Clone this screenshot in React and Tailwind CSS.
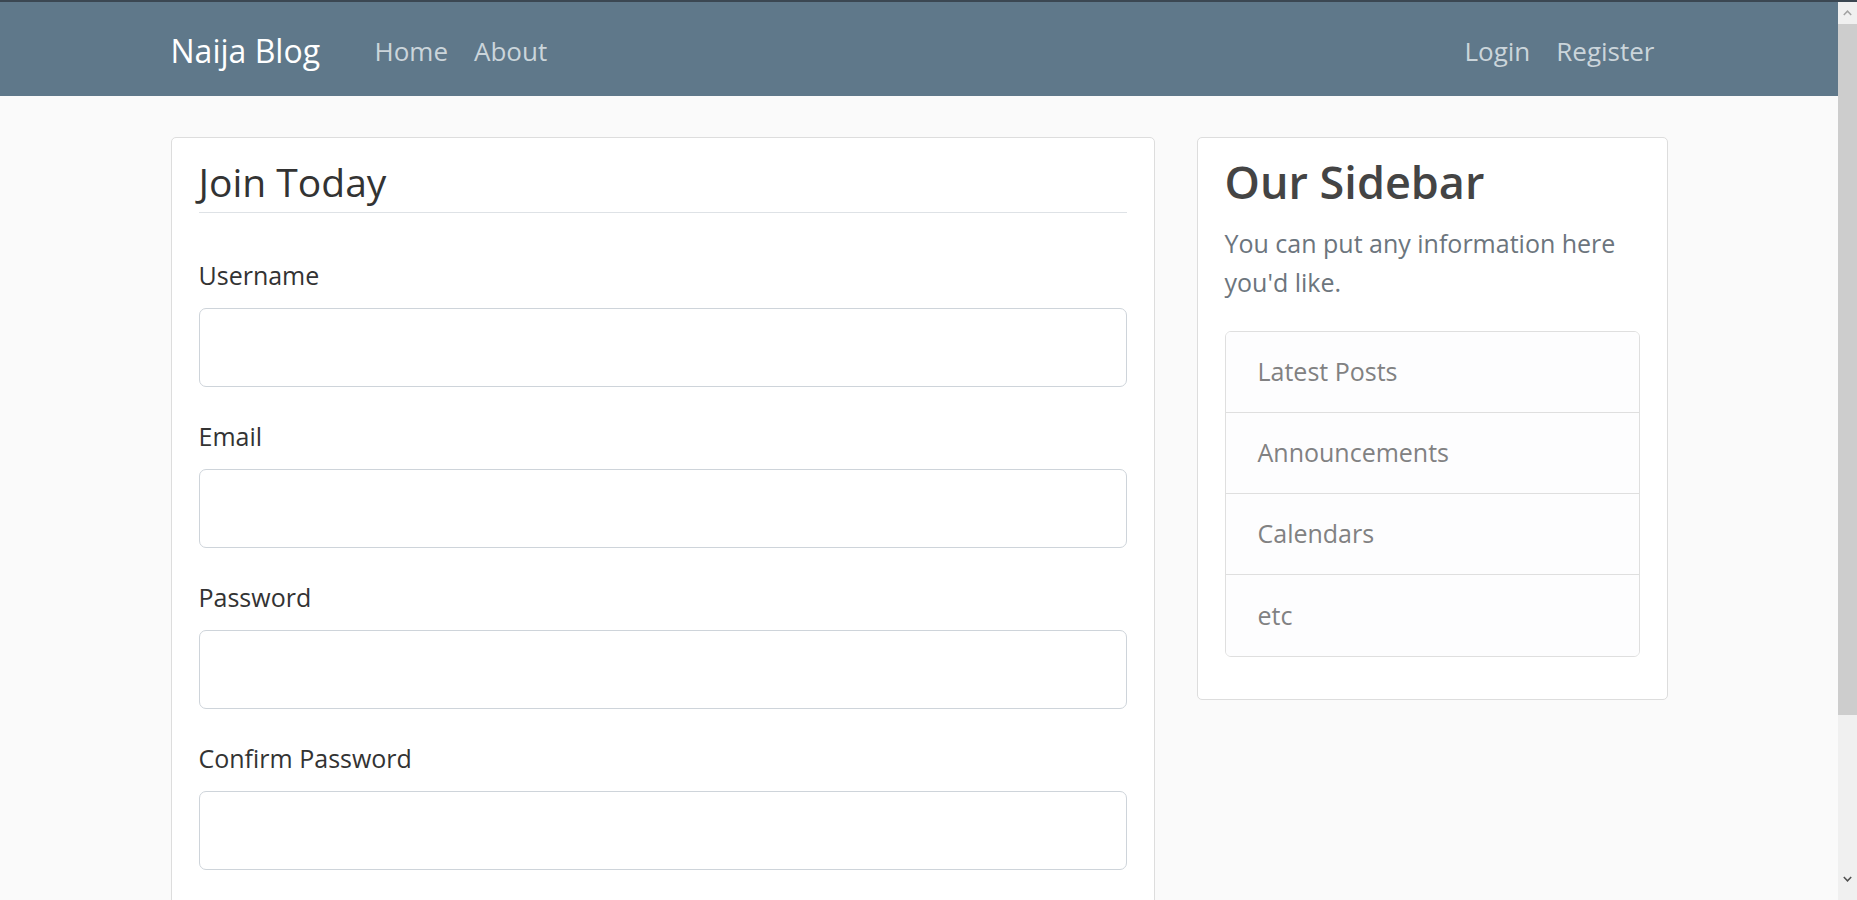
import React from 'react';

const fields = [
  { label: 'Username', type: 'text' },
  { label: 'Email', type: 'email' },
  { label: 'Password', type: 'password' },
  { label: 'Confirm Password', type: 'password' }
];

const sidebarLinks = ['Latest Posts', 'Announcements', 'Calendars', 'etc'];

const Scrollbar = () => (
  <div className="w-[19px] shrink-0 flex flex-col bg-[#f0f0f0]">
    <div className="h-[22px] flex items-center justify-center">
      <svg width="9" height="6" viewBox="0 0 9 6">
        <path d="M0.8 5 L4.5 1.2 L8.2 5" fill="none" stroke="#a3a3a3" strokeWidth="1.5" />
      </svg>
    </div>
    <div className="h-[691px] bg-[#cdcdcd]" />
    <div className="flex-1" />
    <div className="h-[34px] flex justify-center pt-[10px]">
      <svg width="9" height="6" viewBox="0 0 9 6">
        <path d="M0.8 1 L4.5 4.8 L8.2 1" fill="none" stroke="#505050" strokeWidth="1.5" />
      </svg>
    </div>
  </div>
);

const App = () => {
  return (
    <div className="h-screen overflow-hidden flex flex-col bg-[#fafafa] text-[#333333] font-['Open_Sans','Noto_Sans',sans-serif]">
      {/* window frame line */}
      <div className="h-[2px] shrink-0 bg-[#3b4752]" />

      <div className="flex flex-1 min-h-0">
        <div className="flex-1 min-w-0 overflow-hidden">
          {/* Navbar */}
          <header className="h-[94px] bg-[#5f788a] flex items-center pt-[3px]">
            <nav className="w-[1497px] mx-auto flex items-center">
              <a href="#" className="w-[191px] text-[32px] leading-[46px] text-white">
                Naija Blog
              </a>
              <div className="flex">
                <a href="#" className="px-[13px] text-[26px] leading-[40px] text-[#cbd5db]">Home</a>
                <a href="#" className="px-[13px] text-[26px] leading-[40px] text-[#cbd5db]">About</a>
              </div>
              <div className="ml-auto flex">
                <a href="#" className="px-[13px] text-[26px] leading-[40px] text-[#cbd5db]">Login</a>
                <a href="#" className="px-[13px] text-[26px] leading-[40px] text-[#cbd5db]">Register</a>
              </div>
            </nav>
          </header>

          {/* Content */}
          <main className="w-[1497px] mx-auto pt-[41px] flex items-start gap-[42px]">
            {/* Register form */}
            <div className="w-[984px] shrink-0 bg-white border border-[#dddddd] rounded-[5px] px-[27px] pt-[14px] pb-[17px]">
              <form>
                <div className="text-[39px] leading-[60px] border-b border-[#dee2e6] mb-[42px]">
                  Join Today
                </div>
                {fields.map((field) => (
                  <div key={field.label} className="mb-[29px]">
                    <label className="block text-[25px] leading-[40px] mb-[13px]">{field.label}</label>
                    <input
                      type={field.type}
                      className="block w-full h-[79px] bg-white border border-[#ced4da] rounded-[7px] px-[26px] text-[33px] text-[#495057] outline-none"
                    />
                  </div>
                ))}
              </form>
            </div>

            {/* Sidebar */}
            <div className="flex-1 bg-white border border-[#dddddd] rounded-[5px] px-[27px] pt-[16px] pb-[42px]">
              <h3 className="text-[45px] leading-[56px] font-semibold text-[#444444] mb-[14px]">Our Sidebar</h3>
              <p className="text-[25px] leading-[39px] text-[#6c757d] mb-[29px]">
                You can put any information here you'd like.
              </p>
              <ul className="border border-[#dfdfdf] rounded-[6px] overflow-hidden">
                {sidebarLinks.map((item, index) => (
                  <li
                    key={item}
                    className={`h-[81px] flex items-center pl-[32px] bg-[#fdfdfe] text-[25px] text-[#818182] ${
                      index < sidebarLinks.length - 1 ? 'border-b border-[#dfdfdf]' : ''
                    }`}
                  >
                    {item}
                  </li>
                ))}
              </ul>
            </div>
          </main>
        </div>

        <Scrollbar />
      </div>
    </div>
  );
};

export default App;
